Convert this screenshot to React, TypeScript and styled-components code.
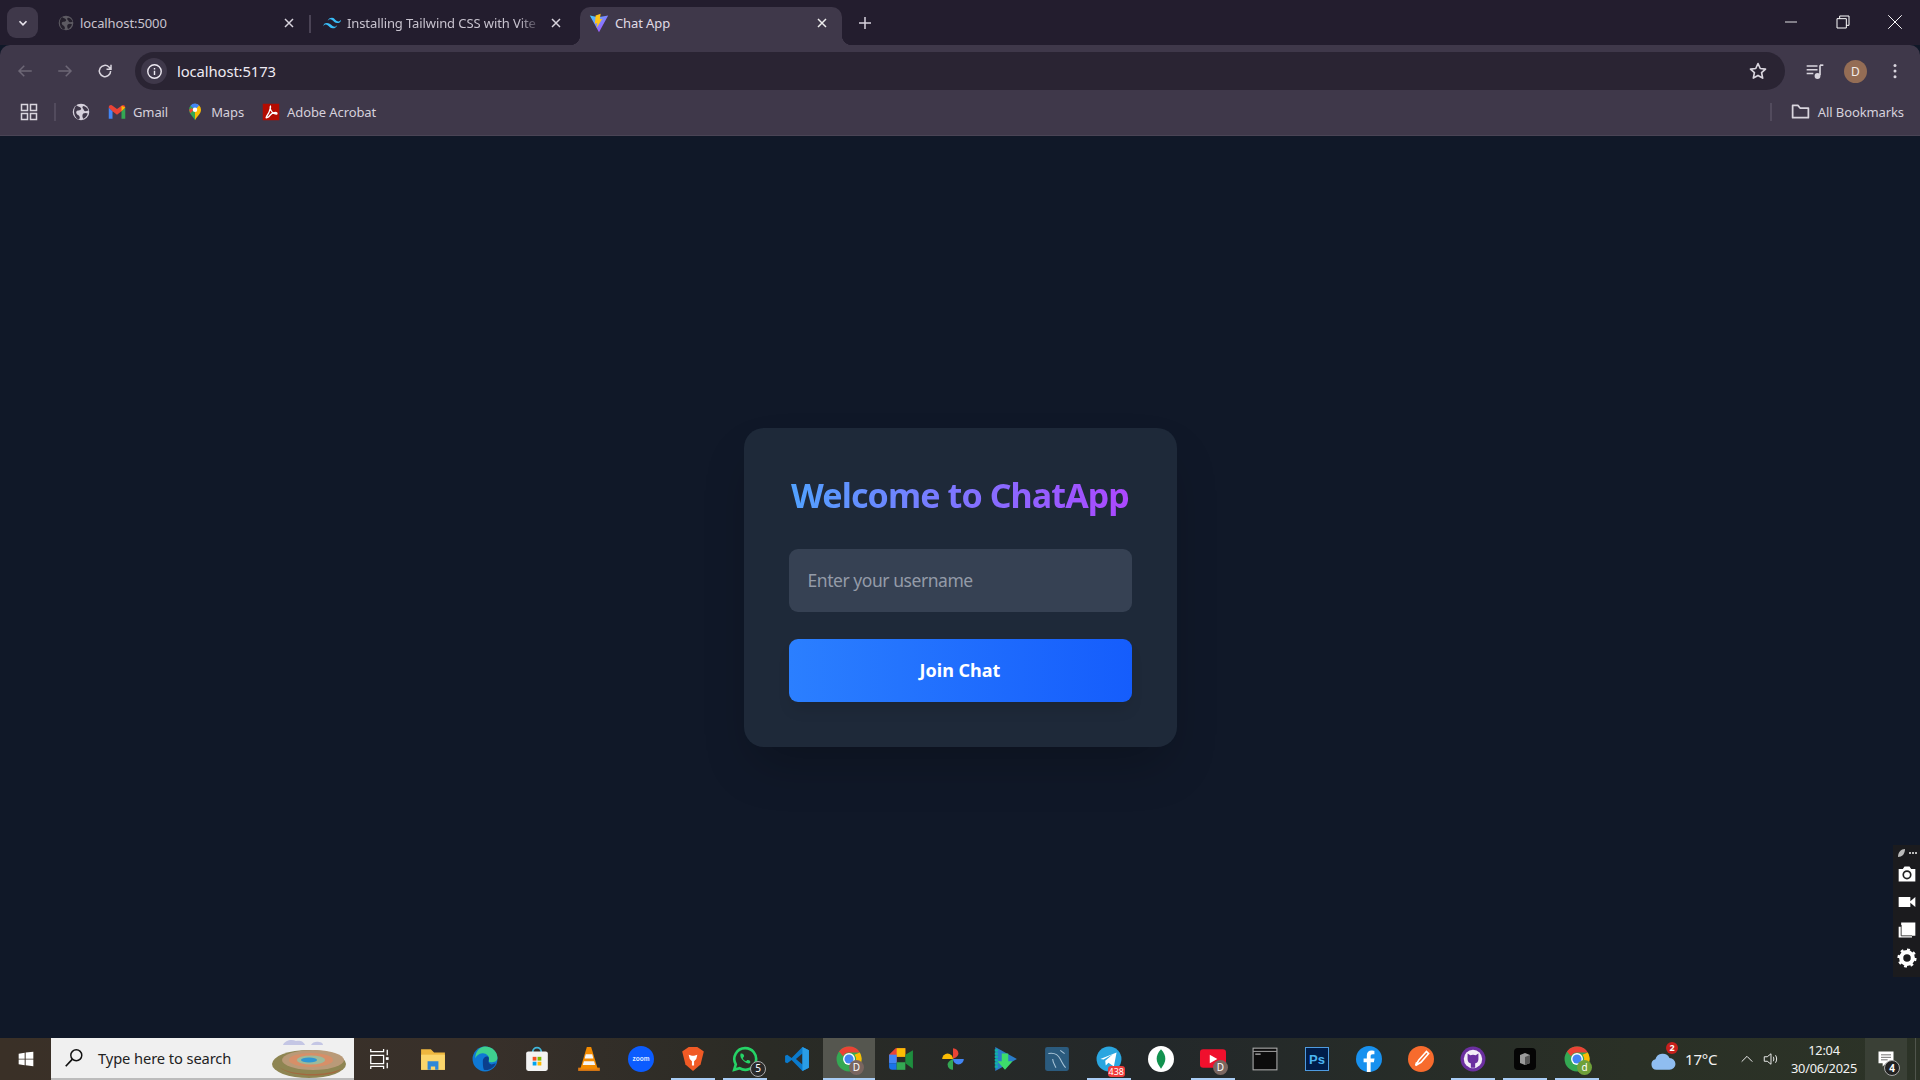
import React from "react";
import styled, { createGlobalStyle } from "styled-components";

const Global = createGlobalStyle`
  html, body { margin: 0; padding: 0; background: #101828; }
  * { box-sizing: border-box; }
  #root { width: 100%; height: 100vh; overflow: hidden; }
`;
const UI = `"Noto Sans", "Open Sans", sans-serif`;

const Screen = styled.div`
  position: relative; height: 1080px; display: flex; flex-direction: column;
  font-family: ${UI}; overflow: hidden;
`;
const TabStrip = styled.div`
  height: 45px; flex: none; background: #231d2e; display: flex; align-items: flex-end; padding-left: 7px;
`;
const TabMenu = styled.div`
  width: 31px; height: 31px; margin-bottom: 7px; margin-right: 8px; flex: none; border-radius: 9px; background: #3f384a;
  display: flex; align-items: center; justify-content: center;
`;
const Tab = styled.div<{ $w: number; $active?: boolean; $pl?: number; $pr?: number }>`
  position: relative; width: ${p => p.$w}px; height: 38px; flex: none; display: flex; align-items: center; gap: 6px;
  padding: 0 ${p => p.$pr ?? 12}px 6px ${p => p.$pl ?? 12}px; border-radius: 10px 10px 0 0;
  background: ${p => (p.$active ? "#3f384a" : "transparent")};
  color: ${p => (p.$active ? "#e0dce6" : "#c8c3cf")};
  ${p => p.$active ? `
    &::before, &::after { content: ""; position: absolute; bottom: 0; width: 10px; height: 10px; }
    &::before { left: -10px; background: radial-gradient(circle at 0 0, transparent 10px, #3f384a 10.5px); }
    &::after { right: -10px; background: radial-gradient(circle at 100% 0, transparent 10px, #3f384a 10.5px); }` : ""}
`;
const TabTitle = styled.span<{ $fade?: boolean }>`
  flex: 1; font-size: 13px; line-height: 16px; white-space: nowrap; overflow: hidden; letter-spacing: -0.1px;
  ${p => p.$fade ? `mask-image: linear-gradient(90deg, #000 88%, transparent 100%);` : ""}
`;
const TabSep = styled.div`
  width: 2px; height: 18px; background: #4a4355; margin: 0 0 12px 0; flex: none;
`;
const NewTab = styled.div`
  width: 30px; height: 30px; margin: 0 0 7px 8px; display: flex; align-items: center; justify-content: center; flex: none;
`;
const WinControls = styled.div`
  margin-left: auto; margin-right: -1px; align-self: flex-start; display: flex; height: 44px;
`;
const WinBtn = styled.div`
  width: 52px; display: flex; align-items: center; justify-content: center;
`;
const Toolbar = styled.div`
  height: 45px; flex: none; background: #3f384a; border-radius: 10px 10px 0 0; display: flex; align-items: flex-end; padding-left: 5px;
`;
const NavBtn = styled.div`
  width: 40px; height: 38px; display: flex; align-items: center; justify-content: center; flex: none;
`;
const Omni = styled.div`
  width: 1650px; margin-left: 10px; height: 38px; background: #2a2433; border-radius: 19px; display: flex; align-items: center; padding: 0 17px 0 6px; flex: none;
`;
const InfoChip = styled.div`
  width: 26px; height: 26px; border-radius: 50%; background: #3f384a; display: flex; align-items: center; justify-content: center; flex: none;
`;
const Url = styled.span`
  margin-left: 10px; font-size: 14.8px; color: #eeeaf2; flex: 1; letter-spacing: -0.1px;
`;
const ToolRight = styled.div`
  flex: 1; height: 38px; display: flex; align-items: center; padding-left: 20px; gap: 19px;
`;
const Avatar = styled.div<{ $bg: string; $size: number; $fs: number }>`
  width: ${p => p.$size}px; height: ${p => p.$size}px; border-radius: 50%; background: ${p => p.$bg}; color: #f3ece8;
  font-size: ${p => p.$fs}px; line-height: ${p => p.$size}px; text-align: center; flex: none;
`;
const Bookmarks = styled.div`
  height: 46px; flex: none; background: #3f384a; border-bottom: 1px solid #4a4455; display: flex; align-items: center; padding: 0 16px 2px 20px;
`;
const Mark = styled.div`
  display: flex; align-items: center; gap: 7px; font-size: 13px; color: #d6d1dc; margin-right: 18px; letter-spacing: -0.1px;
`;
const VSep = styled.div`
  width: 2px; height: 18px; background: #524b5d; flex: none;
`;
const Page = styled.main`
  flex: 1; background: #101828; display: flex; align-items: center; justify-content: center;
`;
const Card = styled.section`
  width: 433px; height: 319px; padding: 45px; background: #1e2939; border-radius: 20px; display: flex; flex-direction: column;
  box-shadow: 0 25px 50px -12px rgba(0,0,0,.25);
`;
const Title = styled.h1`
  margin: 0 0 32px; height: 44px; font-size: 34px; line-height: 44px; font-weight: 700; text-align: center; white-space: nowrap;
  font-family: ${UI}; letter-spacing: -0.9px;
  background: linear-gradient(90deg, #51a2ff, #ad46ff); background-clip: text; -webkit-background-clip: text; color: transparent;
`;
const NameInput = styled.input`
  height: 63px; width: 100%; border: 0; outline: 0; border-radius: 9px; background: #364153; padding: 0 19px; font: 17.5px ${UI}; letter-spacing: -0.45px; color: #fff; flex: none;
  &::placeholder { color: #949ba8; opacity: 1; }
`;
const JoinBtn = styled.button`
  height: 63px; width: 100%; margin-top: 27px; border: 0; border-radius: 9px; color: #fff; font: 700 18px ${UI}; flex: none;
  background: linear-gradient(90deg, #2b7fff, #155dfc); box-shadow: 0 10px 15px -3px rgba(0,0,0,.1);
`;
const Taskbar = styled.footer`
  height: 42px; flex: none; display: flex; align-items: center;
  background: linear-gradient(90deg, #3a3027 0%, #38302a 25%, #2a2b25 40%, #23282a 60%, #2a3026 85%, #2c3327 100%);
`;
const Start = styled.div`
  width: 51px; height: 42px; display: flex; align-items: center; justify-content: center; flex: none;
`;
const SearchBox = styled.div`
  width: 303px; height: 42px; background: #f0f0f0; border-bottom: 2px solid #bcbcbc; display: flex; align-items: center; padding: 0 3px 0 12px; gap: 13px; color: #222; font-size: 14.7px; flex: none; letter-spacing: -0.1px;
`;
const SearchText = styled.span` flex: 1; `;
const TaskView = styled.div`
  width: 53px; height: 42px; display: flex; align-items: center; justify-content: center; padding-right: 3px; flex: none;
`;
const Slot = styled.div<{ $run?: boolean; $active?: boolean }>`
  position: relative; width: 52px; height: 42px; flex: none; display: flex; align-items: center; justify-content: center;
  background: ${p => (p.$active ? "#55564f" : "transparent")};
  &::after { content: ""; position: absolute; left: ${p => (p.$active ? 0 : 4)}px; right: ${p => (p.$active ? 0 : 4)}px; bottom: 0; height: 2px;
    background: ${p => (p.$run ? "#a9cdf5" : "transparent")}; }
`;
const Badge = styled.span<{ $bg: string; $w?: number; $h?: number; $fs?: number; $r?: number; $b?: number; $ring?: boolean }>`
  position: absolute; right: ${p => p.$r ?? 11}px; bottom: ${p => p.$b ?? 5}px; min-width: ${p => p.$w ?? 15}px; height: ${p => p.$h ?? 15}px; padding: 0 1px;
  border-radius: ${p => ((p.$w ?? 15) > 16 ? 3 : 8)}px; background: ${p => p.$bg}; color: #fff; font-size: ${p => p.$fs ?? 10}px; line-height: ${p => p.$h ?? 15}px; text-align: center;
  ${p => (p.$ring ? "border: 1px solid #aaa; line-height: 13px;" : "")}
`;
const Tray = styled.div`
  flex: 1; display: flex; align-items: center; color: #f2f2f2; height: 42px; padding-left: 47px;
`;
const Weather = styled.div`
  position: relative; width: 26px; height: 26px; flex: none;
`;
const WeatherBadge = styled.span`
  position: absolute; right: -2px; top: -4px; width: 12px; height: 12px; border-radius: 50%; background: #c7201c; color: #fff; font-size: 9px; line-height: 12px; text-align: center; font-weight: 700;
`;
const Temp = styled.span` font-size: 15px; margin-left: 9px; width: 54px; letter-spacing: -.2px; flex: none; `;
const Clock = styled.div`
  width: 74px; margin-left: 7px; text-align: center; font-size: 12.8px; line-height: 18px; letter-spacing: -0.2px; flex: none;
`;
const Notify = styled.div`
  position: relative; width: 42px; height: 42px; margin-left: 4px; background: #3a4036; display: flex; align-items: center; justify-content: center; flex: none;
`;
const NotifyBadge = styled.span`
  position: absolute; right: 7px; bottom: 4px; width: 16px; height: 16px; border-radius: 50%; border: 1px solid #aaa; background: #222;
  font-size: 10px; line-height: 14px; text-align: center; color: #fff; font-weight: 700;
`;
const ShowDesktop = styled.div`
  width: 1px; height: 42px; margin-left: 8px; background: #50554c; flex: none;
`;
const Side = styled.aside`
  position: absolute; right: 0; top: 845px; width: 27px; height: 132px; background: #1b1b1e; display: flex; flex-direction: column; align-items: center; padding-top: 3px; gap: 8px;
`;
const SideHead = styled.svg`
  margin-bottom: -2px; flex: none;
`;

const S = (p: React.SVGProps<SVGSVGElement> & { s?: number }) => {
  const { s = 16, ...r } = p;
  return <svg width={s} height={s} viewBox="0 0 24 24" fill="none" {...r} />;
};
const Chevron = () => <S s={14}><path d="M6 9l6 6 6-6" stroke="#e6e2ea" strokeWidth="3" /></S>;
const X = ({ c = "#d8d4dd" }: { c?: string }) => <S s={16}><path d="M6 6l12 12M18 6L6 18" stroke={c} strokeWidth="2.2" /></S>;
const Globe = ({ s = 16, c = "#5d5a62", f = "#25202c" }: { s?: number; c?: string; f?: string }) => (
  <S s={s}><circle cx="12" cy="12" r="11" fill={c} />
    <path d="M6 3c2 2 5 2 6 4s-2 3-4 3-3 2-2 4 3 2 4 4 0 3-1 4C3 20 0 9 6 3zM15 4c3 0 6 3 7 6l-4 1c-2 0-2-2-3-3s-2-3 0-4zM15 14c2-1 4-1 6 0-1 3-3 6-6 7-1-2-2-5 0-7z" fill={f} /></S>
);
const Tailwind = () => <S s={18}><path d="M12 5C9 5 7 6.500 6 9.500c1.500-2 3-2.700 4.800-2.200 1 .3 1.800 1 2.600 1.800C14.800 10.400 16 12 19 12c3 0 5-1.500 5-4.500-1.500 2-3 2.700-4.800 2.200-1-.3-1.800-1-2.600-1.800C15.200 6.600 14.800 5 12 5zM5 12c-3 0-4 1.500-5 4.500 1.500-2 3-2.700 4.800-2.200 1 .3 1.800 1 2.600 1.800C8.800 17.400 10 19 13 19c3 0 5-1.500 6-4.500-1.500 2-3 2.700-4.800 2.200-1-.3-1.800-1-2.600-1.800C10.200 13.600 8 12 5 12z" fill="#38bdf8" /></S>;
const Vite = () => (
  <S s={20}><defs><linearGradient id="vg" x1="0" y1="0" x2="1" y2="1"><stop offset="0" stopColor="#41d1ff" /><stop offset="1" stopColor="#bd34fe" /></linearGradient></defs>
    <path d="M1 3l10 2 12-2-11 20z" fill="url(#vg)" /><path d="M14 1l-6 2-1 10 3-1-1 6 7-11-3 .5z" fill="#ffc517" /></S>
);
const Arrow = ({ flip, c }: { flip?: boolean; c: string }) => (
  <S s={18} style={flip ? { transform: "scaleX(-1)" } : undefined}><path d="M21 12H4M11 5l-7 7 7 7" stroke={c} strokeWidth="2" /></S>
);
const Reload = () => <S s={18}><path d="M19.500 12a7.500 7.500 0 1 1-2.200-5.300L20 9.500M20 3.500v6h-6" stroke="#d9d5de" strokeWidth="2" /></S>;
const Info = () => <S s={17}><circle cx="12" cy="12" r="9.500" stroke="#eeeaf2" strokeWidth="2" /><path d="M12 11v6M12 7v2" stroke="#eeeaf2" strokeWidth="2" /></S>;
const Star = () => <S s={20}><path d="M12 3l2.700 6 6.300.7-4.700 4.300 1.300 6.500L12 17.300 6.400 20.500l1.300-6.500L3 9.700 9.300 9z" stroke="#d9d5de" strokeWidth="2" strokeLinejoin="round" /></S>;
const Media = () => <S s={20}><path d="M2 6h13M2 10.500h13M2 15h8" stroke="#d9d5de" strokeWidth="2" /><path d="M18 5v12" stroke="#d9d5de" strokeWidth="2" /><path d="M18 5h4" stroke="#d9d5de" strokeWidth="2" /><circle cx="15" cy="18" r="3.500" fill="#d9d5de" /></S>;
const Dots = () => <S s={18}><circle cx="12" cy="4.500" r="2" fill="#d9d5de" /><circle cx="12" cy="12" r="2" fill="#d9d5de" /><circle cx="12" cy="19.500" r="2" fill="#d9d5de" /></S>;
const Apps = () => <S s={18}><path d="M2 2h8v8H2zM14 2h8v8h-8zM2 14h8v8H2zM14 14h8v8h-8z" stroke="#d9d5de" strokeWidth="2" /></S>;
const Gmail = () => <S s={18}><path d="M1 6v15h5V11z" fill="#4285f4" /><path d="M23 6v15h-5V11z" fill="#34a853" /><path d="M1 6c0-3 3-4 5-2.500L12 8l6-4.500C20 2 23 3 23 6l-5 5-6 4.500L6 11z" fill="#ea4335" /><path d="M18 3.500l5 2.500-5 5z" fill="#fbbc04" /></S>;
const Maps = () => <S s={18}><path d="M12 1a8 8 0 0 0-8 8c0 6 6 9 8 14z" fill="#34a853" /><path d="M12 1a8 8 0 0 1 8 8c0 6-6 9-8 14z" fill="#fbbc04" /><path d="M6 3.500A8 8 0 0 1 17.500 3l-3 3.500h-5z" fill="#4285f4" /><path d="M4 9l4-2.500 2 3-4 4z" fill="#ea4335" /><circle cx="12" cy="9" r="3" fill="#fff" /></S>;
const Acrobat = () => <S s={18}><rect x="1" y="1" width="22" height="22" fill="#b30b00" /><path d="M12 4c-1 0 0 6-6 14-2 3 2 2 5-2s9-4 9-2-6 0-8-4-1-6 0-6z" stroke="#fff" strokeWidth="1.700" /></S>;
const Folder = () => <S s={21}><path d="M3 5h6l2.500 3H21v11H3z" stroke="#d9d5de" strokeWidth="2" strokeLinejoin="round" /></S>;
const Win = () => <S s={16}><path d="M1 4l9-1.300V11.500H1zM11.500 2.400L23 1v10.500H11.500zM1 12.800h9v8.500l-9-1.300zM11.500 12.800H23V23l-11.500-1.600z" fill="#fff" /></S>;
const Magnifier = () => <S s={22}><circle cx="14.500" cy="9" r="6" stroke="#111" strokeWidth="1.600" /><path d="M10 13.500L3 21" stroke="#111" strokeWidth="1.800" /></S>;
const Crater = () => (
  <svg width="80" height="42" viewBox="0 0 80 42"><path d="M12 8c2-5 9-6 13-4 3-1 8 0 9 4zM40 8c1-3 6-4 8-3 2 0 4 1 4 3z" fill="#c4c6e4" />
    <ellipse cx="38" cy="27" rx="37" ry="14" fill="#8e8552" /><ellipse cx="42" cy="23" rx="31" ry="10" fill="#b99a78" /><ellipse cx="40" cy="23" rx="22" ry="7" fill="#d78f68" /><ellipse cx="40" cy="23" rx="14" ry="4.500" fill="#9cb99b" /><ellipse cx="38" cy="23" rx="8" ry="2.600" fill="#2f97d3" /><path d="M8 30c10 8 45 10 62 2-8 9-50 9-62-2z" fill="#a4683f" /></svg>
);
const TaskViewIcon = () => <S s={22}><path d="M3 1v3h14V1M3 23v-3h14v3M3 8h14v9H3z" stroke="#fff" strokeWidth="1.400" /><path d="M21 2v6M21 16v6" stroke="#fff" strokeWidth="1.400" /><rect x="19.500" y="10" width="3" height="3" fill="#fff" /></S>;
const Explorer = () => <S s={26}><path d="M1 3h9l3 3h10v16H1z" fill="#eeb73f" /><path d="M1 8h22v14H1z" fill="#fbd66c" /><path d="M7 14h10v8h-3v-3h-4v3H7z" fill="#2f88d8" /></S>;
const Edge = () => <S s={26}><circle cx="12" cy="12" r="11.500" fill="#0f78d4" /><path d="M12 .5c7 0 11.500 5 11.500 10.500 0 3-3 4-6 4-2 0-3-1-2-2 1-4-3-7-7-6C5 7.500 3 11 3 12 3 5 7 .5 12 .5z" fill="#3ed18f" /><path d="M10 14c0-3 3-5 5-4 2 2-2 6 3 7l4-1c-2 5-7 7-11 6-1-3-1-5-1-8z" fill="#0b3f8c" /></S>;
const Store = () => <S s={26}><path d="M8 6c0-6 8-6 8 0" stroke="#3fb7dc" strokeWidth="1.600" /><rect x="2" y="5" width="20" height="18" rx="2" fill="#f3f3f3" /><path d="M8 10h3.500v3.500H8z" fill="#f25022" /><path d="M12.500 10H16v3.500h-3.500z" fill="#7fba00" /><path d="M8 14.500h3.500V18H8z" fill="#00a4ef" /><path d="M12.500 14.500H16V18h-3.500z" fill="#ffb900" /></S>;
const Vlc = () => <S s={26}><path d="M2 20h20v3H2z" fill="#e17b12" /><path d="M10 1h4l6 20H4z" fill="#f48b00" /><path d="M9 7.500h6l1 4H8zM7.300 14h9.400l1 3.500H6.300z" fill="#f5f5f5" /></S>;
const Zoom = () => (
  <svg width="26" height="26" viewBox="0 0 26 26"><circle cx="13" cy="13" r="13" fill="#0b5cff" /><text x="13" y="15" textAnchor="middle" fontSize="6.500" fontWeight="700" fontFamily="Liberation Sans, sans-serif" fill="#dfeaff">zoom</text></svg>
);
const Brave = () => <S s={26}><path d="M5 3l3-2h8l3 2 3 2-1 4-2 8-7 6-7-6-2-8-1-4z" fill="#f05a25" /><path d="M8 8l3 1h2l3-1-1 4-2 2v4h-2v-4l-2-2z" fill="#fff" /></S>;
const Whats = () => <S s={26}><path d="M12 2a10 10 0 0 0-8.500 15L2 22l5-1.500A10 10 0 1 0 12 2z" stroke="#25d366" strokeWidth="2.400" /><path d="M8 7c-1 2 0 5 3 7s5 3 6 1c0-2-2-2.500-3-2l-1 1c-2-1-3-2-3-3l1-1c.5-1 0-3-3-3z" fill="#25d366" /></S>;
const VSCode = () => <S s={26}><path d="M17 1l6 3v16l-6 3L7 13l-4 3-2-1V9l2-1 4 3z" fill="#0a7acc" /><path d="M17 7v10l-6-5z" fill="#2c2c2c" /><path d="M17 1l6 3v16l-6 3z" fill="#2a9de6" /></S>;
const Chrome = () => <S s={26}><circle cx="12" cy="12" r="11.500" fill="#34a853" /><path d="M12 .5A11.500 11.500 0 0 1 22 6H12a6 6 0 0 0-5.500 3.500L2.800 5A11.500 11.500 0 0 1 12 .5z" fill="#ea4335" /><path d="M22 6a11.500 11.500 0 0 1-9 17.500l4.200-8A6 6 0 0 0 17 8z" fill="#fbbc04" /><circle cx="12" cy="12" r="5.500" fill="#fff" /><circle cx="12" cy="12" r="4.200" fill="#4285f4" /></S>;
const Meet = () => <S s={26}><path d="M1 8l6-6h9v8H8v5H1z" fill="#ea4335" /><path d="M8 2h8v8H8z" fill="#fbbc04" /><path d="M1 8h7v8H1z" fill="#4285f4" /><path d="M1 16h7v6H4c-2 0-3-1-3-3z" fill="#1a73e8" /><path d="M8 15h8v7H8z" fill="#34a853" /><path d="M16 8v8l7 5V4z" fill="#1e8e3e" /></S>;
const Photos = () => <S s={26}><path d="M12 12H2a5 5 0 0 1 10 0z" fill="#fbbc04" /><path d="M12 12V2a5 5 0 0 1 5 5c0 3-5 5-5 5z" fill="#ea4335" /><path d="M12 12h10a5 5 0 0 1-10 0z" fill="#4285f4" /><path d="M12 12v10a5 5 0 0 1-5-5c0-3 5-5 5-5z" fill="#34a853" /></S>;
const PlayDl = () => <S s={26}><path d="M3 1l20 11L3 23z" fill="#2a7cc8" /><path d="M4 3v18" stroke="#0fb5a5" strokeWidth="3" strokeDasharray="2 1" /><path d="M9 7h6v7h4l-7 8-7-8h4z" fill="#3ddc6a" /></S>;
const MySql = () => <S s={26}><rect x="1" y="1" width="22" height="22" rx="2" fill="#2b5b7e" /><path d="M4 7c5-1 9 1 11 5s3 6 5 8M8 12c0 3 2 6 3 8M15 4l4 3" stroke="#a8c3d6" strokeWidth="1" /></S>;
const Telegram = () => <S s={26}><circle cx="12" cy="12" r="11.500" fill="#2aa6e0" /><path d="M4 12l15-6-2.500 13-5-3.500-2.500 2.500-.5-4.500 7-6-8.500 5z" fill="#fff" /></S>;
const Mongo = () => <S s={26}><circle cx="12" cy="12" r="12" fill="#fff" /><path d="M12 3c3 3 4 6 4 9s-2 6-4 9c-2-3-4-6-4-9s1-6 4-9z" fill="#12924f" /></S>;
const Youtube = () => <S s={26}><rect x="0" y="3" width="24" height="17" rx="3" fill="#f0102d" /><path d="M9 8l7 4-7 4z" fill="#fff" /></S>;
const Term = () => <S s={26}><rect x="1" y="2" width="22" height="20" fill="#0c0c0c" stroke="#a9a9a9" /><path d="M1 5h22" stroke="#999" /><path d="M3 7.500h5" stroke="#ccc" /></S>;
const Ps = () => (
  <svg width="24" height="24" viewBox="0 0 24 24"><rect x=".5" y=".5" width="23" height="23" fill="#001d4a" stroke="#4e9be0" /><text x="12" y="17" textAnchor="middle" fontSize="13" fontWeight="700" fontFamily="Liberation Sans, sans-serif" fill="#4bb4f0">Ps</text></svg>
);
const Fb = () => <S s={26}><circle cx="12" cy="12" r="12" fill="#1891ef" /><path d="M13.500 24v-9h3l.6-3.500h-3.600V9.500c0-1.200.5-2 2-2H17V4.500s-1.500-.3-2.700-.3C11.800 4.200 10 5.800 10 8.500v3H7V15h3v9z" fill="#fff" /></S>;
const Postman = () => <S s={26}><circle cx="12" cy="12" r="12" fill="#f76b2d" /><path d="M17 5l-7 8-3 5 5-3 7-8zM8 15l-1 3" stroke="#fff" strokeWidth="1.500" /></S>;
const Github = () => <S s={26}><circle cx="12" cy="12" r="11.500" fill="#6b2fa0" /><circle cx="12" cy="12" r="8.500" fill="#f3edf7" /><path d="M7 7l2.500 1.500a7 7 0 0 1 5 0L17 7v5c0 3-2 4-3 4v4h-4v-4c-1 0-3-1-3-4z" fill="#6b2fa0" /></S>;
const Dark = () => <S s={24}><rect x="1" y="1" width="22" height="22" rx="4" fill="#050505" /><path d="M7 8l5-2 5 2v8l-5 2-5-2z" fill="#9a9a9a" /><path d="M12 10v8l5-2V8z" fill="#555" /></S>;

type App = { icon: React.ReactNode; run?: boolean; active?: boolean; badge?: React.ReactNode };
const apps: App[] = [
  { icon: <Explorer /> }, { icon: <Edge /> }, { icon: <Store /> }, { icon: <Vlc /> }, { icon: <Zoom /> },
  { icon: <Brave />, run: true },
  { icon: <Whats />, run: true, badge: <Badge $bg="#2a2a2a" $ring $w={16} $h={16} $r={5} $b={3}>5</Badge> },
  { icon: <VSCode /> },
  { icon: <Chrome />, run: true, active: true, badge: <Badge $bg="#7a6660">D</Badge> },
  { icon: <Meet /> }, { icon: <Photos /> }, { icon: <PlayDl /> }, { icon: <MySql /> },
  { icon: <Telegram />, run: true, badge: <Badge $bg="#ef3b3b" $w={17} $h={11} $fs={9} $r={10} $b={3}>438</Badge> },
  { icon: <Mongo /> },
  { icon: <Youtube />, run: true, badge: <Badge $bg="#7a6660">D</Badge> },
  { icon: <Term /> }, { icon: <Ps /> }, { icon: <Fb /> }, { icon: <Postman /> },
  { icon: <Github />, run: true }, { icon: <Dark />, run: true },
  { icon: <Chrome />, run: true, badge: <Badge $bg="#6fa03a">d</Badge> },
];

export default function AppRoot() {
  return (
    <Screen>
      <Global />
      <TabStrip>
        <TabMenu><Chevron /></TabMenu>
        <Tab $w={263}><Globe /><TabTitle>localhost:5000</TabTitle><X /></Tab>
        <TabSep />
        <Tab $w={269} $pr={16}><Tailwind /><TabTitle $fade>Installing Tailwind CSS with Vite</TabTitle><X /></Tab>
        <Tab $w={262} $active $pl={9}><Vite /><TabTitle>Chat App</TabTitle><X c="#eee" /></Tab>
        <NewTab><S s={18}><path d="M12 4v16M4 12h16" stroke="#d8d2de" strokeWidth="2" /></S></NewTab>
        <WinControls>
          <WinBtn><S s={16}><path d="M3 12h18" stroke="#fff" strokeWidth="1.300" /></S></WinBtn>
          <WinBtn><S s={16}><path d="M3 7h14v14H3zM7 7V3h14v14h-4" stroke="#fff" strokeWidth="1.500" /></S></WinBtn>
          <WinBtn><S s={18}><path d="M3 3l18 18M21 3L3 21" stroke="#fff" strokeWidth="1.300" /></S></WinBtn>
        </WinControls>
      </TabStrip>
      <Toolbar>
        <NavBtn><Arrow c="#6d6776" /></NavBtn>
        <NavBtn><Arrow flip c="#6d6776" /></NavBtn>
        <NavBtn><Reload /></NavBtn>
        <Omni>
          <InfoChip><Info /></InfoChip>
          <Url>localhost:5173</Url>
          <Star />
        </Omni>
        <ToolRight>
          <Media />
          <Avatar $bg="#946d55" $size={23} $fs={12}>D</Avatar>
          <Dots />
        </ToolRight>
      </Toolbar>
      <Bookmarks>
        <Apps />
        <VSep style={{ marginLeft: 16, marginRight: 16 }} />
        <Mark><Globe s={18} c="#d6d1dc" f="#3f384a" /></Mark>
        <Mark><Gmail />Gmail</Mark>
        <Mark><Maps />Maps</Mark>
        <Mark><Acrobat />Adobe Acrobat</Mark>
        <VSep style={{ marginLeft: "auto", marginRight: 18 }} />
        <Mark style={{ marginRight: 0 }}><Folder />All Bookmarks</Mark>
      </Bookmarks>
      <Page>
        <Card>
          <Title>Welcome to ChatApp</Title>
          <NameInput placeholder="Enter your username" />
          <JoinBtn>Join Chat</JoinBtn>
        </Card>
      </Page>
      <Taskbar>
        <Start><Win /></Start>
        <SearchBox><Magnifier /><SearchText>Type here to search</SearchText><Crater /></SearchBox>
        <TaskView><TaskViewIcon /></TaskView>
        {apps.map((a, i) => (
          <Slot key={i} $run={a.run} $active={a.active}>{a.icon}{a.badge}</Slot>
        ))}
        <Tray>
          <Weather>
            <S s={26}><path d="M6 22a5 5 0 0 1-1-9.800A7 7 0 0 1 18 11a5.500 5.500 0 0 1 0 11z" fill="#8fbdf0" /></S>
            <WeatherBadge>2</WeatherBadge>
          </Weather>
          <Temp>17°C</Temp>
          <S s={16}><path d="M4 16l8-8 8 8" stroke="#eee" strokeWidth="1.500" /></S>
          <S s={18} style={{ marginLeft: 7 }}><path d="M3 9v6h4l5 4V5L7 9zM15 9c1 2 1 4 0 6M18 7c2 3 2 7 0 10" stroke="#eee" strokeWidth="1.300" /></S>
          <Clock>12:04<br />30/06/2025</Clock>
          <Notify>
            <S s={20}><path d="M3 3h18v14H12l-4 4v-4H3z" fill="#fff" /><path d="M6 7h12M6 10h12M6 13h8" stroke="#555" /></S>
            <NotifyBadge>4</NotifyBadge>
          </Notify>
          <ShowDesktop />
        </Tray>
      </Taskbar>
      <Side>
        <SideHead width="20" height="10" viewBox="0 0 20 10"><path d="M1 9c0-5 3-8 7-8 0 5-3 8-7 8z" fill="#bbb" /><path d="M12 5h2M15 5h2M18 5h2" stroke="#bbb" strokeWidth="2" /></SideHead>
        <S s={20}><path d="M2 6h5l2-3h6l2 3h5v15H2z" fill="#fff" /><circle cx="12" cy="13" r="4.500" fill="none" stroke="#222" strokeWidth="2" /></S>
        <S s={20}><path d="M2 6h14v12H2zM16 11l6-5v12l-6-5z" fill="#fff" /></S>
        <S s={20}><path d="M2 8h3V3h17v16h-4v2H2z" fill="#fff" /><path d="M5 6v13h13" stroke="#222" strokeWidth="1" /></S>
        <S s={20}><circle cx="12" cy="12" r="7" stroke="#fff" strokeWidth="5" /><circle cx="12" cy="12" r="10" stroke="#fff" strokeWidth="3" strokeDasharray="3.500 4.300" /></S>
      </Side>
    </Screen>
  );
}
